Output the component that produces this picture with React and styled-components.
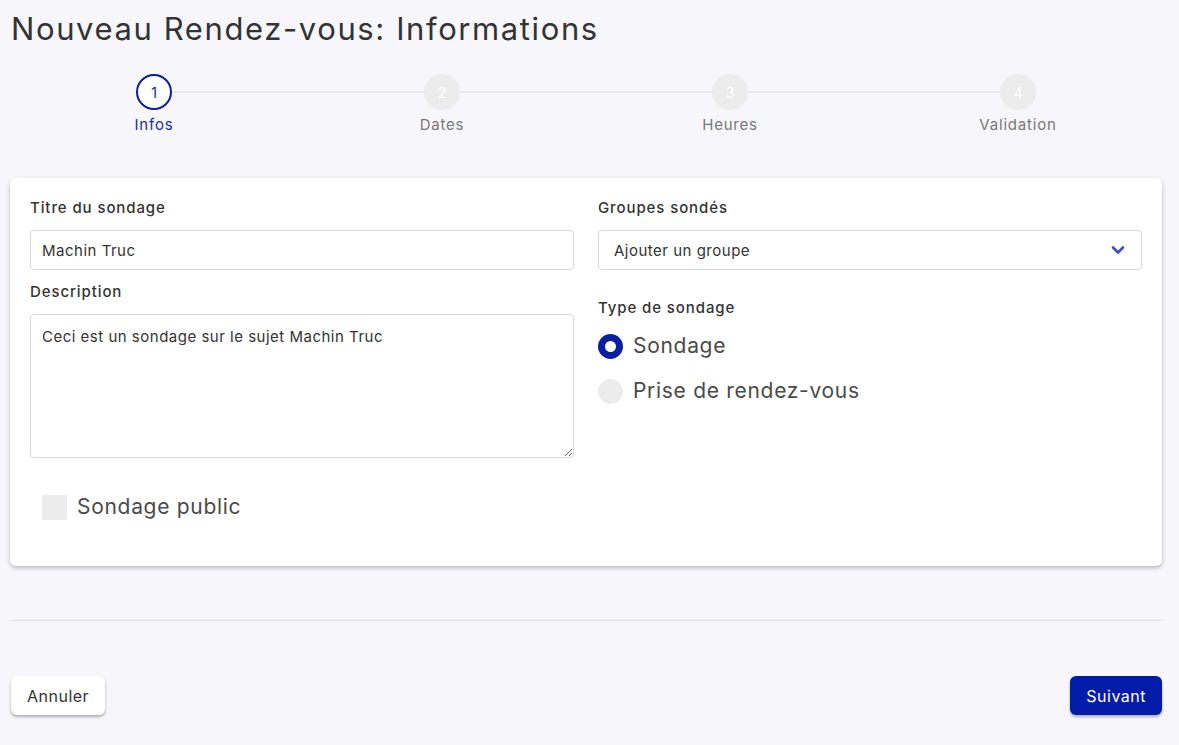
import React from 'react';
import styled, { createGlobalStyle } from 'styled-components';

const GlobalStyle = createGlobalStyle`
	html, body {
		margin: 0;
		padding: 0;
		background: #f7f7fb;
		font-family: Inter, 'Noto Sans', sans-serif;
		color: #333;
	}
	* {
		box-sizing: border-box;
	}
`;

const steps = ['Infos', 'Dates', 'Heures', 'Validation'];

function Stepper({ active }) {
	return (
		<StepRow>
			{steps.map((label, i) => (
				<Step key={label} first={i === 0} last={i === steps.length - 1}>
					<Circle active={i === active}>{i + 1}</Circle>
					<StepLabel active={i === active}>{label}</StepLabel>
				</Step>
			))}
		</StepRow>
	);
}

function App() {
	return (
		<Page>
			<GlobalStyle />
			<Title>Nouveau Rendez-vous: Informations</Title>
			<Stepper active={0} />
			<Card>
				<Column>
					<Field>
						<Label>Titre du sondage</Label>
						<Input defaultValue="Machin Truc" />
					</Field>
					<Field>
						<Label>Description</Label>
						<TextArea defaultValue="Ceci est un sondage sur le sujet Machin Truc" />
					</Field>
					<CheckRow>
						<CheckBox />
						<BigText>Sondage public</BigText>
					</CheckRow>
				</Column>
				<Column>
					<Field>
						<Label>Groupes sondés</Label>
						<Select>
							<span>Ajouter un groupe</span>
							<svg width="14" height="10" viewBox="0 0 14 10">
								<path
									d="M2 2.5 L7 7.5 L12 2.5"
									fill="none"
									stroke="#3b4fc4"
									strokeWidth="2.6"
									strokeLinecap="round"
									strokeLinejoin="round"
								/>
							</svg>
						</Select>
					</Field>
					<Field gap="14">
						<Label top="16">Type de sondage</Label>
						<RadioRow>
							<Radio checked />
							<BigText>Sondage</BigText>
						</RadioRow>
						<RadioRow>
							<Radio />
							<BigText>Prise de rendez-vous</BigText>
						</RadioRow>
					</Field>
				</Column>
			</Card>
			<Divider />
			<Footer>
				<Button>Annuler</Button>
				<Button primary>Suivant</Button>
			</Footer>
		</Page>
	);
}

export default App;

const Page = styled.div`
	padding: 0 17px 0 10px;
	min-height: 745px;
`;

const Title = styled.h1`
	margin: 0;
	padding: 9px 0 0 1px;
	font-size: 31px;
	font-weight: 400;
	line-height: 40px;
	letter-spacing: 1.6px;
	color: #333;
`;

const StepRow = styled.div`
	display: grid;
	grid-template-columns: repeat(4, 1fr);
	margin-top: 25px;
`;

const Step = styled.div`
	position: relative;
	display: flex;
	flex-direction: column;
	align-items: center;

	&::before {
		content: '';
		position: absolute;
		top: 17px;
		height: 2px;
		background: #e9e9ee;
		left: ${(p) => (p.first ? '50%' : '0')};
		right: ${(p) => (p.last ? '50%' : '0')};
	}
`;

const Circle = styled.div`
	position: relative;
	width: 36px;
	height: 36px;
	border-radius: 50%;
	display: flex;
	align-items: center;
	justify-content: center;
	font-size: 14px;
	background: ${(p) => (p.active ? '#fff' : '#ececec')};
	border: 2px solid ${(p) => (p.active ? '#0a1fa0' : '#ececec')};
	color: ${(p) => (p.active ? '#0a1fa0' : '#fff')};
`;

const StepLabel = styled.div`
	margin-top: 5px;
	font-size: 15px;
	line-height: 20px;
	letter-spacing: 0.8px;
	color: ${(p) => (p.active ? '#1b2eaa' : '#777')};
`;

const Card = styled.div`
	margin-top: 43px;
	background: #fff;
	border-radius: 6px;
	box-shadow: 0 2px 4px rgba(0, 0, 0, 0.25);
	padding: 20px 20px 45px;
	display: grid;
	grid-template-columns: 1fr 1fr;
	column-gap: 24px;
	align-items: start;
`;

const Column = styled.div`
	display: flex;
	flex-direction: column;
	gap: 12px;
`;

const Field = styled.div`
	display: flex;
	flex-direction: column;
	gap: ${(p) => p.gap || 12}px;
`;

const Label = styled.label`
	font-size: 15px;
	font-weight: 500;
	line-height: 20px;
	letter-spacing: 0.9px;
	color: #333;
	margin-top: ${(p) => p.top || 0}px;
`;

const Input = styled.input`
	height: 40px;
	border: 1px solid #dadada;
	border-radius: 4px;
	padding: 0 11px;
	font: inherit;
	font-size: 15px;
	letter-spacing: 0.5px;
	color: #333;
	outline: none;
`;

const TextArea = styled.textarea`
	height: 144px;
	border: 1px solid #dadada;
	border-radius: 4px;
	padding: 12px 11px;
	font: inherit;
	font-size: 15px;
	letter-spacing: 0.5px;
	color: #333;
	outline: none;
	resize: vertical;
`;

const Select = styled.div`
	height: 40px;
	border: 1px solid #dadada;
	border-radius: 4px;
	padding: 0 16px 0 15px;
	display: flex;
	align-items: center;
	justify-content: space-between;
	font-size: 15px;
	letter-spacing: 0.5px;
	color: #333;
`;

const CheckRow = styled.div`
	display: flex;
	align-items: center;
	gap: 10px;
	margin: 23px 0 0 12px;
`;

const CheckBox = styled.span`
	width: 25px;
	height: 25px;
	background: #ececec;
`;

const BigText = styled.span`
	font-size: 21px;
	line-height: 28px;
	letter-spacing: 0.7px;
	color: #4a4a4a;
`;

const RadioRow = styled.div`
	display: flex;
	align-items: center;
	gap: 10px;
	margin-bottom: 3px;
`;

const Radio = styled.span`
	width: 25px;
	height: 25px;
	border-radius: 50%;
	background: ${(p) => (p.checked ? '#fff' : '#ececec')};
	border: ${(p) => (p.checked ? '7px solid #0a1fa0' : 'none')};
`;

const Divider = styled.hr`
	margin: 54px 0 0;
	border: none;
	border-top: 1px solid #dedee4;
`;

const Footer = styled.div`
	display: flex;
	justify-content: space-between;
	margin-top: 55px;
	padding-left: 1px;
`;

const Button = styled.button`
	height: 39px;
	padding: 0 16px;
	border: none;
	border-radius: 6px;
	font-family: inherit;
	font-size: 16px;
	letter-spacing: 0.5px;
	background: ${(p) => (p.primary ? '#021ba8' : '#fff')};
	color: ${(p) => (p.primary ? '#fff' : '#333')};
	box-shadow: 0 2px 3px rgba(0, 0, 0, 0.3);
`;
